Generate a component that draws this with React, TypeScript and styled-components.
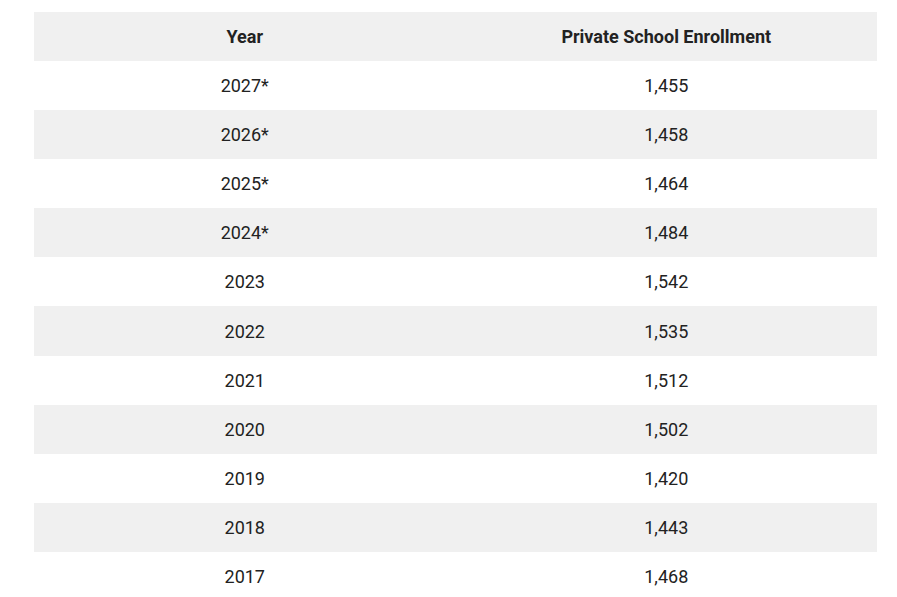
import React from "react";
import styled, { createGlobalStyle } from "styled-components";

const Global = createGlobalStyle`
  html, body { margin: 0; padding: 0; background: #fff; }
  body { font-family: Roboto, "Liberation Sans", Arial, sans-serif; }
`;

const Page = styled.div`
  padding: 12px 20px 0 34px;
`;

const Table = styled.table`
  width: 843px;
  border-collapse: collapse;
  table-layout: fixed;
  color: #222;
  font-size: 18px;
`;

const HeadCell = styled.th`
  height: 49px;
  padding: 0;
  font-weight: 700;
  text-align: center;
  vertical-align: middle;
`;

const Row = styled.tr<{ $shaded: boolean }>`
  background: ${(p) => (p.$shaded ? "#f0f0f0" : "#fff")};
`;

const Cell = styled.td`
  height: 49.1px;
  padding: 0;
  font-weight: 400;
  text-align: center;
  vertical-align: middle;
`;

const data: [string, string][] = [
  ["2027*", "1,455"],
  ["2026*", "1,458"],
  ["2025*", "1,464"],
  ["2024*", "1,484"],
  ["2023", "1,542"],
  ["2022", "1,535"],
  ["2021", "1,512"],
  ["2020", "1,502"],
  ["2019", "1,420"],
  ["2018", "1,443"],
  ["2017", "1,468"],
];

export default function App() {
  return (
    <>
      <Global />
      <Page>
        <Table>
          <thead>
            <Row $shaded>
              <HeadCell>Year</HeadCell>
              <HeadCell>Private School Enrollment</HeadCell>
            </Row>
          </thead>
          <tbody>
            {data.map(([y, v], i) => (
              <Row key={y} $shaded={i % 2 === 1}>
                <Cell>{y}</Cell>
                <Cell>{v}</Cell>
              </Row>
            ))}
          </tbody>
        </Table>
      </Page>
    </>
  );
}
